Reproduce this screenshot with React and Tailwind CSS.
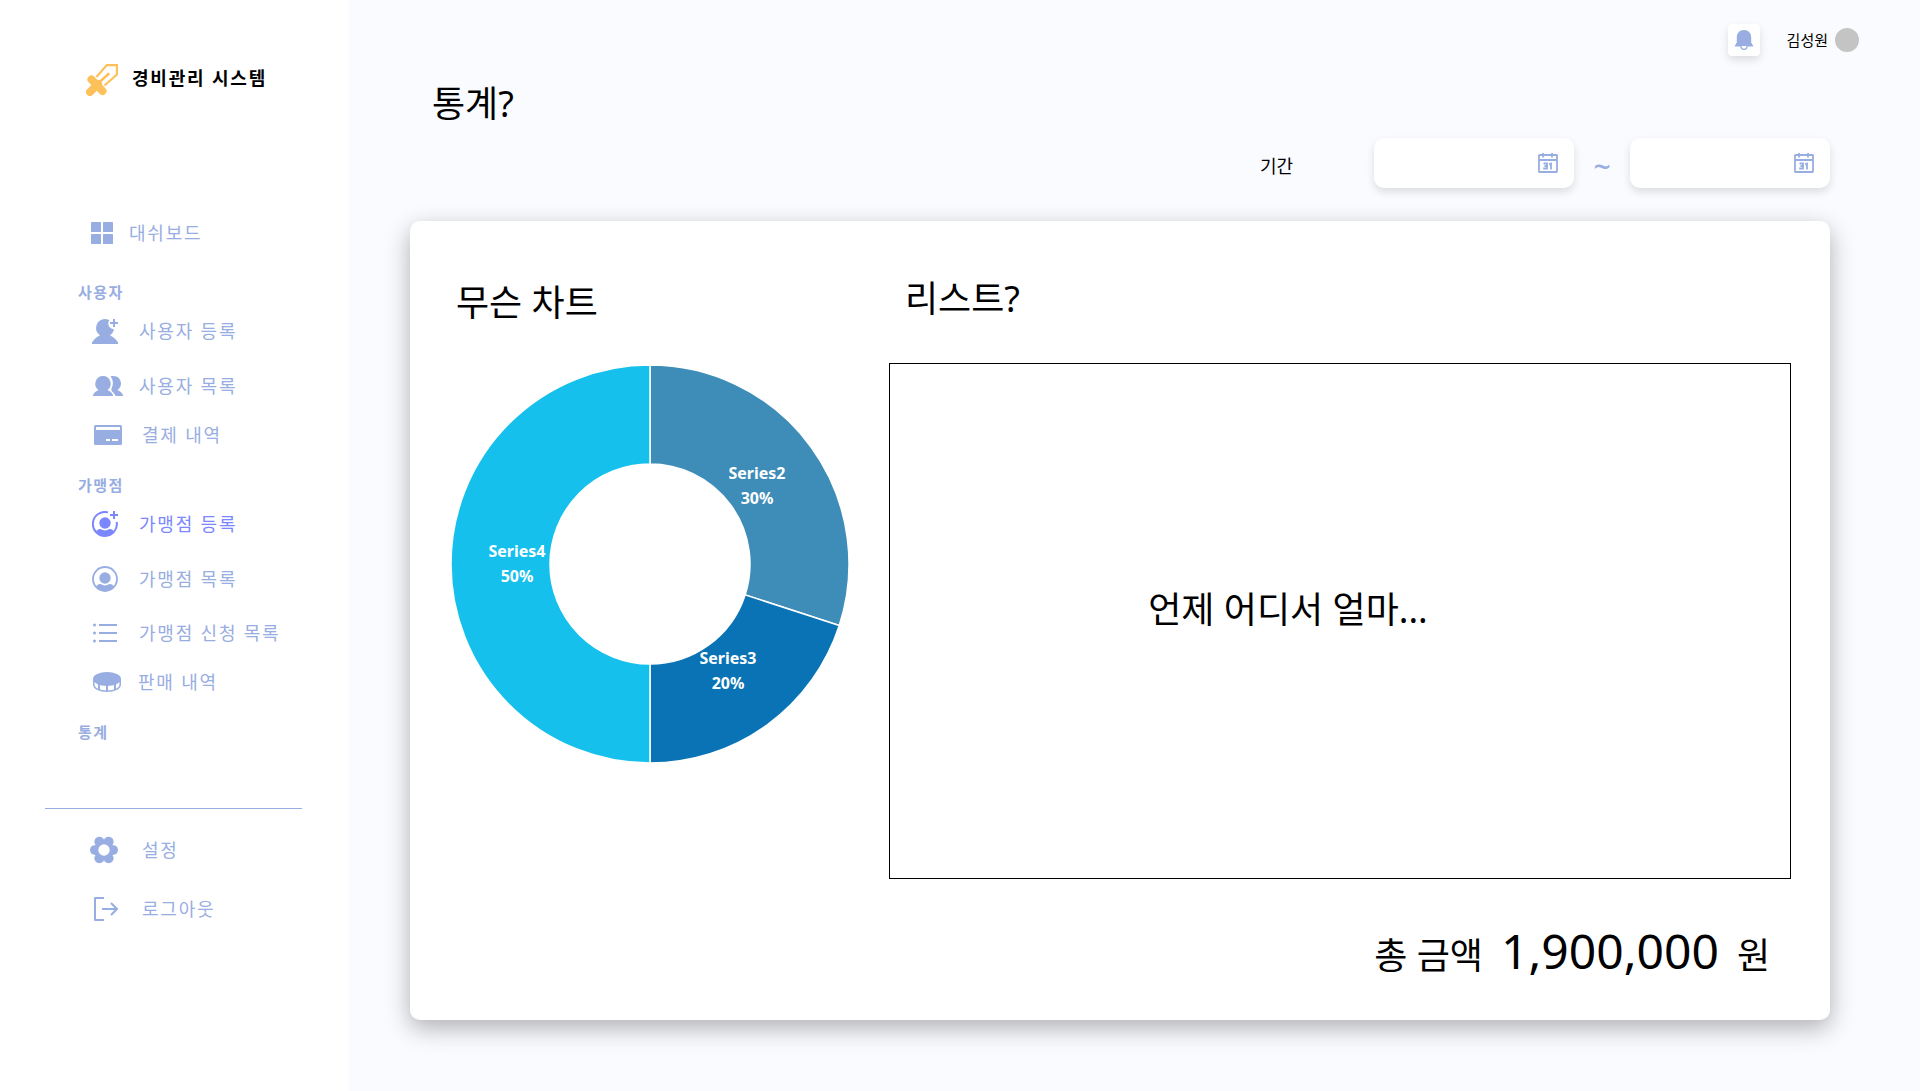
import React, { useId } from 'react';

const sans = "font-['Noto_Sans','Noto_Sans_CJK_KR',sans-serif]";

function SwordIcon() {
  return (
    <svg viewBox="0 0 32 32" className="h-8 w-8" fill="none" stroke="#FDC15C" aria-hidden="true">
      <path d="M10.500 13 20.800 1.100H30.900V10.500L18.500 21.500" strokeWidth="2.200" />
      <path d="M13 18.500 22.500 10" strokeWidth="2.600" strokeLinecap="round" />
      <path d="M5.500 15.500 16.500 27" strokeWidth="8" strokeLinecap="round" />
      <path d="M4 28 12 20" strokeWidth="8" strokeLinecap="round" />
    </svg>
  );
}

function GridIcon() {
  return (
    <svg viewBox="0 0 22 22" className="h-[22px] w-[22px]" fill="currentColor" aria-hidden="true">
      <rect width="10" height="10" rx="0.5" /><rect x="12" width="10" height="10" rx="0.5" />
      <rect y="12" width="10" height="10" rx="0.5" /><rect x="12" y="12" width="10" height="10" rx="0.5" />
    </svg>
  );
}

function UserAddIcon() {
  const id = useId();
  return (
    <svg viewBox="0 0 26 25" className="h-[25px] w-[26px]" fill="currentColor" aria-hidden="true">
      <mask id={id}>
        <rect width="26" height="25" fill="white" />
        <circle cx="22" cy="4.500" r="5.700" fill="black" />
      </mask>
      <path mask={`url(#${id})`} d="M13 0a9 9 0 0 1 5 16.4C21.500 17.700 24.500 20.500 26 23.500V25H0V23.500C1.500 20.500 4.500 17.700 8 16.400A9 9 0 0 1 13 0Z" />
      <path d="M21 0h2v3h3v2h-3v3h-2v-3h-3v-2h3z" />
    </svg>
  );
}

function UsersIcon() {
  return (
    <svg viewBox="0 0 30 20" className="h-5 w-[30px]" fill="currentColor" aria-hidden="true">
      <path d="M10 0a7.800 7.800 0 0 1 4.500 14.100C17 15.200 19 17 20 19v1H0v-1c1-2 3-3.800 5.500-4.900A7.800 7.800 0 0 1 10 0Z" />
      <path d="M17.500 .4C24 -1.200 28 3 28 7.500c0 2.800-1.300 5.200-3.500 6.600C27 15.200 29 17 30 19v1h-7.500c-.8-2-2.300-3.700-4-5v-2.500C20.500 8.500 20.500 4 17.500 .4Z" />
    </svg>
  );
}

function CardIcon() {
  return (
    <svg viewBox="0 0 28 20" className="h-5 w-7" aria-hidden="true">
      <rect width="28" height="20" rx="1.500" fill="currentColor" />
      <path d="M2 2h24v3H2zM12 14h4v2h-4zM18 14h6v2h-6z" fill="white" />
    </svg>
  );
}

function StoreUserIcon({ add = false }) {
  return (
    <svg viewBox="0 0 26 26" className="h-[26px] w-[26px]" fill="none" aria-hidden="true">
      {add ? (
        <path d="M16 1.400A12 12 0 1 0 24.700 11" stroke="currentColor" strokeWidth="2" />
      ) : (
        <circle cx="13" cy="13" r="12" stroke="currentColor" strokeWidth="1.800" />
      )}
      <circle cx="13" cy="12" r="5.700" fill="currentColor" />
      <path d="M4 20.500C5 18.800 6.800 17.800 8.500 18.100c3 1.700 6 1.700 9 0 1.700-.3 3.500.7 4.500 2.400A12 12 0 0 1 4 20.500Z" fill="currentColor" />
      {add && <path d="M22 0v8M18 4h8" stroke="currentColor" strokeWidth="2" />}
    </svg>
  );
}

function ListIcon() {
  return (
    <svg viewBox="0 0 24 20" className="h-5 w-6" fill="currentColor" aria-hidden="true">
      <path d="M6 1h18v2H6zM6 9h18v2H6zM6 17h18v2H6z" />
      <circle cx="1.500" cy="2" r="1.500" /><circle cx="1.500" cy="10" r="1.500" /><circle cx="1.500" cy="18" r="1.500" />
    </svg>
  );
}

function CoinIcon() {
  return (
    <svg viewBox="0 0 28 20" className="h-5 w-7" fill="none" aria-hidden="true">
      <path d="M.8 7.500v5C.8 16.500 6.500 19.200 14 19.200s13.200-2.700 13.200-6.700v-5" stroke="currentColor" strokeWidth="1.500" />
      <ellipse cx="14" cy="7" rx="14" ry="7" fill="currentColor" />
      <path d="M6 12v6M14 13v6M22 12v6" stroke="currentColor" strokeWidth="2" />
    </svg>
  );
}

function GearIcon() {
  return (
    <svg viewBox="0 0 28 28" className="h-7 w-7" aria-hidden="true">
      <g fill="currentColor">
        <circle cx="14" cy="14" r="10" />
        <circle cx="4.800" cy="14" r="4.800" /><circle cx="23.200" cy="14" r="4.800" />
        <circle cx="9.400" cy="5.800" r="5" /><circle cx="18.600" cy="5.800" r="5" />
        <circle cx="9.400" cy="22.200" r="5" /><circle cx="18.600" cy="22.200" r="5" />
      </g>
      <circle cx="14" cy="14" r="5.700" fill="white" />
    </svg>
  );
}

function LogoutIcon() {
  return (
    <svg viewBox="0 0 24 24" className="h-6 w-6" fill="none" stroke="currentColor" strokeWidth="2" aria-hidden="true">
      <path d="M10 1H1v22h9" strokeLinejoin="round" />
      <path d="M8 12h15M17 6l6 6-6 6" />
    </svg>
  );
}

function BellIcon() {
  return (
    <svg viewBox="0 0 18 20" className="h-5 w-[18px]" aria-hidden="true">
      <path d="M9 0c4.600 0 7.200 3.200 7.200 7.500V12.500L18 15.500V16.500H0V15.500L1.800 12.500V7.500C1.800 3.200 4.400 0 9 0Z" fill="currentColor" />
      <path d="M6 16a3 3.300 0 0 0 6 0" fill="white" stroke="currentColor" strokeWidth="1.300" />
    </svg>
  );
}

function CalendarIcon() {
  return (
    <svg viewBox="0 0 20 20" className="h-5 w-5" fill="none" stroke="#98ADE1" strokeWidth="1.800" aria-hidden="true">
      <rect x="1" y="2" width="18" height="17" rx="0.500" />
      <path d="M1 7h18M5 0v4.500M14 0v4.500" />
      <path d="M5.500 10.500h3.500v5H5.200M6.500 13H9M11 11.300l2-.8v6" />
    </svg>
  );
}

function NavLink({ icon, label, active = false, pad = 'pl-[92px]', gap = 'gap-[21px]', space = '' }) {
  return (
    <a
      href="#"
      aria-current={active ? 'page' : undefined}
      className={`flex h-7 items-center text-lg leading-7 tracking-widest ${pad} ${gap} ${space} ${active ? 'text-[#7B87FF]' : 'text-[#98ADE1]'}`}
    >
      {icon}
      <span>{label}</span>
    </a>
  );
}

function NavHeading({ children, space }) {
  return <h2 className={`pl-[78px] text-[15px] leading-6 font-bold tracking-widest text-[#98ADE1] ${space}`}>{children}</h2>;
}

function Sidebar() {
  return (
    <aside className="w-[349px] shrink-0 bg-white pt-16">
      <div className="flex h-8 items-start gap-[14px] pl-[86px]">
        <SwordIcon />
        <h1 className="text-lg leading-7 font-bold tracking-widest text-black">경비관리 시스템</h1>
      </div>
      <nav aria-label="주 메뉴">
        <NavLink icon={<GridIcon />} label="대쉬보드" pad="pl-[91px]" gap="gap-4" space="mt-[123px]" />
        <NavHeading space="mt-[33px]">사용자</NavHeading>
        <NavLink icon={<UserAddIcon />} label="사용자 등록" space="mt-[13px]" />
        <NavLink icon={<UsersIcon />} label="사용자 목록" space="mt-[27px]" pad="pl-[93px]" gap="gap-4" />
        <NavLink icon={<CardIcon />} label="결제 내역" space="mt-[21px]" pad="pl-[94px]" gap="gap-5" />
        <NavHeading space="mt-6">가맹점</NavHeading>
        <NavLink icon={<StoreUserIcon add />} label="가맹점 등록" active space="mt-[13px]" />
        <NavLink icon={<StoreUserIcon />} label="가맹점 목록" space="mt-[27px]" />
        <NavLink icon={<ListIcon />} label="가맹점 신청 목록" space="mt-[26px]" pad="pl-[93px]" gap="gap-[22px]" />
        <NavLink icon={<CoinIcon />} label="판매 내역" space="mt-[21px]" pad="pl-[93px]" gap="gap-[17px]" />
        <NavHeading space="mt-6">통계</NavHeading>
      </nav>
      <hr className="mt-16 mr-[47px] ml-[45px] border-[#98ADE1]" />
      <NavLink icon={<GearIcon />} label="설정" space="mt-[27px]" pad="pl-[90px]" gap="gap-6" />
      <NavLink icon={<LogoutIcon />} label="로그아웃" space="mt-[31px]" pad="pl-[94px]" gap="gap-6" />
    </aside>
  );
}

function DateField({ label }) {
  return (
    <div className="flex h-[50px] w-[200px] items-center rounded-[10px] bg-white pr-4 shadow-[0_4px_8px_rgba(0,0,0,0.12)]">
      <input type="text" aria-label={label} className="min-w-0 flex-1 bg-transparent px-3 outline-none" />
      <button type="button" aria-label={`${label} 선택`}><CalendarIcon /></button>
    </div>
  );
}

const slices = [
  { name: 'Series2', share: 30, color: '#3E8CB8', x: 307, y: 115 },
  { name: 'Series3', share: 20, color: '#0973B5', x: 278, y: 300 },
  { name: 'Series4', share: 50, color: '#15C0ED', x: 67, y: 193 },
];

function point(share, radius) {
  const angle = (share / 100) * 2 * Math.PI;
  return `${200 + radius * Math.sin(angle)} ${200 - radius * Math.cos(angle)}`;
}

function DonutChart() {
  let start = 0;
  return (
    <svg viewBox="0 0 400 400" className="h-[400px] w-[400px]" role="img" aria-label="무슨 차트">
      {slices.map((s) => {
        const from = start;
        start += s.share;
        return (
          <path
            key={s.name}
            d={`M${point(from, 199)}A199 199 0 0 1 ${point(start, 199)}L${point(start, 100)}A100 100 0 0 0 ${point(from, 100)}Z`}
            fill={s.color}
            stroke="white"
            strokeWidth="1.500"
          />
        );
      })}
      <g fill="white" textAnchor="middle" className="font-['Noto_Sans',sans-serif] text-base font-bold">
        {slices.map((s) => (
          <text key={s.name} x={s.x} y={s.y}>
            {s.name}
            <tspan x={s.x} dy="25">{s.share}%</tspan>
          </text>
        ))}
      </g>
    </svg>
  );
}

export default function App() {
  return (
    <div className={`flex min-h-screen bg-[#FAFBFF] text-black ${sans}`}>
      <Sidebar />
      <div className="flex min-w-0 flex-1 flex-col pb-[71px]">
        <header className="mt-6 mr-[61px] flex h-8 items-center justify-end">
          <button type="button" aria-label="알림" className="flex h-8 w-8 items-center justify-center rounded bg-white text-[#98ADE1] shadow-[0_4px_8px_rgba(0,0,0,0.12)]">
            <BellIcon />
          </button>
          <span className="ml-[27px] text-[15px] leading-6">김성원</span>
          <span className="ml-[7px] h-6 w-6 rounded-full bg-[#C4C4C4]" />
        </header>
        <main className="mr-[90px] ml-[61px] flex flex-1 flex-col">
          <h2 className="mt-[21px] ml-[22px] text-4xl leading-[54px]">통계?</h2>
          <div className="mt-[7px] flex items-center justify-end">
            <span className="mr-[81px] pt-[6px] text-lg leading-7">기간</span>
            <DateField label="시작일" />
            <span className="w-14 pt-2 text-center text-3xl leading-9 font-medium text-[#98ADE1]">~</span>
            <DateField label="종료일" />
          </div>
          <div className="mt-[33px] flex flex-1 gap-[39px] rounded-[10px] bg-white pr-[39px] pl-10 shadow-[0_8px_24px_rgba(0,0,0,0.3)]">
            <section className="w-[400px] shrink-0">
              <h3 className="mt-[55px] ml-[6px] text-4xl leading-[54px]">무슨 차트</h3>
              <div className="mt-[34px]"><DonutChart /></div>
            </section>
            <section className="flex min-w-0 flex-1 flex-col">
              <h3 className="mt-[51px] ml-4 text-4xl leading-[54px]">리스트?</h3>
              <div className="mt-[37px] flex min-h-[516px] items-center justify-center border border-black text-4xl">
                <p className="pr-[104px] pb-[22px] leading-[54px]">언제 어디서 얼마...</p>
              </div>
              <p className="mt-9 mr-[21px] flex items-baseline justify-end text-4xl leading-[72px]">
                <span>총 금액</span>
                <strong className="mx-[18px] text-5xl leading-[72px] font-normal">1,900,000</strong>
                <span>원</span>
              </p>
            </section>
          </div>
        </main>
      </div>
    </div>
  );
}
